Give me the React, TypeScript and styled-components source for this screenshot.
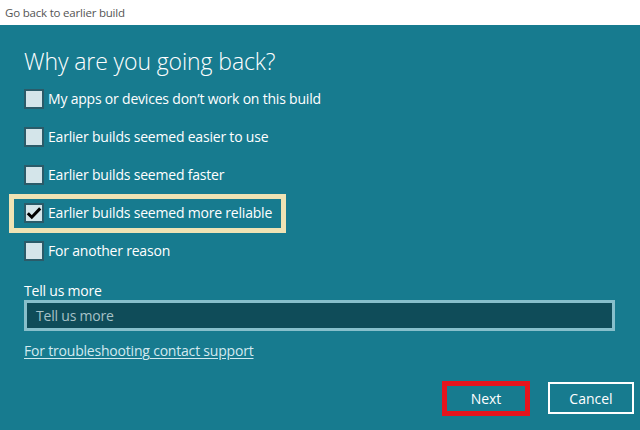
import React from 'react'
import styled, { createGlobalStyle } from 'styled-components'

const GlobalStyle = createGlobalStyle`
  html, body {
    margin: 0;
    padding: 0;
    background: #177b8f;
  }
  body {
    font-family: 'Open Sans', 'Noto Sans', 'Liberation Sans', sans-serif;
  }
`

const Window = styled.div`
  width: 640px;
  height: 430px;
  overflow: hidden;
  display: flex;
  flex-direction: column;
  background: #177b8f;
`

const TitleBar = styled.div`
  height: 25px;
  flex-shrink: 0;
  background: #ffffff;
  display: flex;
  align-items: center;
  padding-left: 5px;
  font-size: 11.5px;
  color: #555555;
  letter-spacing: -0.2px;
`

const Panel = styled.div`
  display: flex;
  flex-direction: column;
  padding: 0 24px;
  color: #ffffff;
`

const Heading = styled.h1`
  margin: 18px 0 0;
  font-size: 23px;
  font-weight: 300;
  line-height: 37px;
  letter-spacing: -0.1px;
`

const OptionList = styled.div`
  display: flex;
  flex-direction: column;
`

const OptionRow = styled.div`
  height: 38px;
  display: flex;
  align-items: center;
`

const OptionLabel = styled.label<{ $highlight?: boolean }>`
  display: inline-flex;
  align-items: center;
  gap: 4px;
  padding: 4px 9px 5px 10px;
  margin-left: -10px;
  font-size: 14px;
  letter-spacing: -0.2px;
  outline: ${({ $highlight }) => ($highlight ? '5px solid #efe3b4' : 'none')};
`

const Box = styled.span`
  width: 20px;
  height: 20px;
  box-sizing: border-box;
  border: 2px solid #2b5b69;
  background: #d4e5ea;
  display: flex;
  align-items: center;
  justify-content: center;
`

const FieldLabel = styled.div`
  margin-top: 12px;
  font-size: 14px;
  line-height: 18px;
  letter-spacing: -0.2px;
`

const TextInput = styled.div`
  width: 591px;
  height: 31px;
  box-sizing: border-box;
  border: 3px solid #87bfcb;
  background: #0f4c59;
  color: #a7c2c8;
  font-size: 14px;
  letter-spacing: -0.2px;
  display: flex;
  align-items: center;
  padding-left: 9px;
`

const SupportLink = styled.a`
  margin-top: 11px;
  align-self: flex-start;
  color: #d2e9ef;
  font-size: 14px;
  line-height: 18px;
  letter-spacing: -0.2px;
  text-decoration: underline;
  text-underline-offset: 2px;
`

const ButtonRow = styled.div`
  display: flex;
  justify-content: flex-end;
  align-items: flex-start;
  gap: 18px;
  margin-top: 21px;
  margin-right: -18px;
`

const Button = styled.div<{ $marked?: boolean }>`
  box-sizing: border-box;
  width: ${({ $marked }) => ($marked ? '88px' : '86px')};
  height: ${({ $marked }) => ($marked ? '35px' : '32px')};
  margin-top: ${({ $marked }) => ($marked ? '0' : '1px')};
  border: ${({ $marked }) => ($marked ? '5px solid #e5141d' : '2px solid #ffffff')};
  display: flex;
  align-items: center;
  justify-content: center;
  color: #ffffff;
  font-size: 14px;
`

const reasons = [
  { text: 'My apps or devices don\u2019t work on this build', checked: false },
  { text: 'Earlier builds seemed easier to use', checked: false },
  { text: 'Earlier builds seemed faster', checked: false },
  { text: 'Earlier builds seemed more reliable', checked: true },
  { text: 'For another reason', checked: false },
]

const Check = () => (
  <svg width="16" height="16" viewBox="0 0 16 16">
    <path d="M1.8 8.2 L5.8 12.2 L14.2 3.4" fill="none" stroke="#000" strokeWidth="3" />
  </svg>
)

const App: React.FC = () => {
  return (
    <>
      <GlobalStyle />
      <Window>
        <TitleBar>Go back to earlier build</TitleBar>
        <Panel>
          <Heading>Why are you going back?</Heading>
          <OptionList>
            {reasons.map((reason, index) => (
              <OptionRow key={index}>
                <OptionLabel $highlight={reason.checked}>
                  <Box>{reason.checked && <Check />}</Box>
                  {reason.text}
                </OptionLabel>
              </OptionRow>
            ))}
          </OptionList>
          <FieldLabel>Tell us more</FieldLabel>
          <TextInput>Tell us more</TextInput>
          <SupportLink>For troubleshooting contact support</SupportLink>
          <ButtonRow>
            <Button $marked>Next</Button>
            <Button>Cancel</Button>
          </ButtonRow>
        </Panel>
      </Window>
    </>
  )
}

export default App
